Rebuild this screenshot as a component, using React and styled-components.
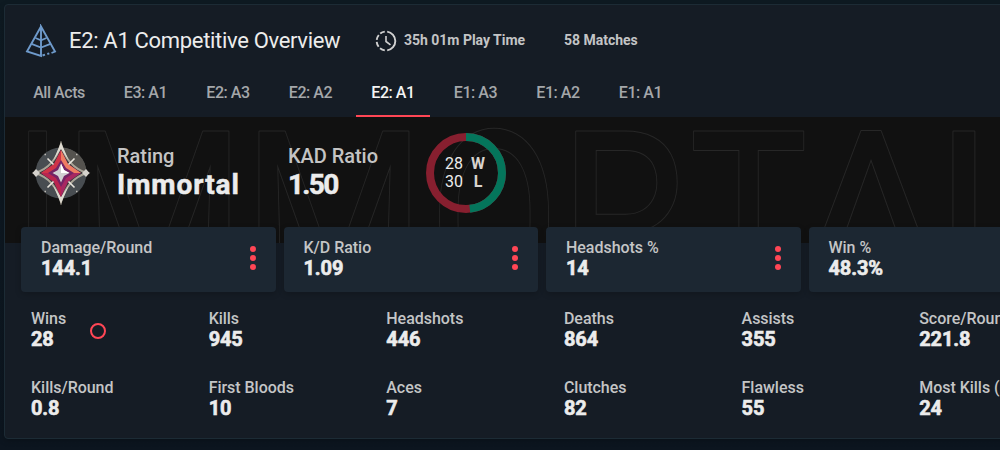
import React from "react";
import styled, { createGlobalStyle } from "styled-components";

const GlobalStyle = createGlobalStyle`
  *, *::before, *::after { box-sizing: border-box; }
  html, body { margin: 0; height: 100%; overflow: hidden; }
  body {
    background: linear-gradient(#0e1a22, #0c151f);
    font-family: Roboto, "Liberation Sans", sans-serif;
    color: #ececec;
    white-space: nowrap;
  }
`;

const Page = styled.main`
  height: 450px;
  padding: 4px;
  overflow: hidden;
`;

const Panel = styled.section`
  width: 1077px;
  height: 435px;
  border: 1px solid #1c2b35;
  border-radius: 4px;
  background: #151c25;
  overflow: hidden;
  box-shadow: 0 2px 6px rgba(0, 0, 0, 0.2);
`;

const Header = styled.header`
  display: flex;
  align-items: center;
  height: 72px;
  padding-left: 20px;
`;

const Title = styled.h1`
  margin: 0 34px 0 12px;
  width: 272px;
  font-size: 22px;
  line-height: 26px;
  font-weight: 400;
  letter-spacing: -0.32px;
`;

const Meta = styled.div`
  display: flex;
  align-items: center;
  gap: 7px;
  width: ${(p) => p.$width}px;
  margin-top: -2px;
  font-size: 14px;
  font-weight: 700;
  letter-spacing: -0.02px;
  color: #c3c4c5;
  svg { position: relative; top: 1px; }
`;

const Tabs = styled.nav`
  display: flex;
  gap: 8.5px;
  height: 40px;
  padding-left: 13px;
`;

const Tab = styled.div`
  width: ${(p) => (p.$wide ? 82 : 74)}px;
  height: 40px;
  line-height: 32px;
  text-align: center;
  font-size: 16px;
  font-weight: 500;
  letter-spacing: -0.45px;
  color: ${(p) => (p.$active ? "#f4f4f4" : "#a4a7aa")};
  border-bottom: 2px solid ${(p) => (p.$active ? "#ff4655" : "transparent")};
`;

const Banner = styled.div`
  position: relative;
  height: 126px;
  background: #111;
  overflow: hidden;
`;

const Watermark = styled.svg`
  position: absolute;
  inset: 0;
  font-family: Roboto, sans-serif;
  font-size: 239px;
  fill: #111;
  stroke: #272727;
  stroke-width: 2px;
  stroke-linejoin: round;
  paint-order: stroke;
`;

const Summary = styled.div`
  position: relative;
  display: flex;
  align-items: center;
  height: 112px;
  padding-left: 26px;
`;

const Rank = styled.div`
  width: ${(p) => p.$width}px;
  margin: -4px 0 0 ${(p) => p.$gap}px;
`;

const RankLabel = styled.div`
  font-size: 20px;
  line-height: 26px;
  font-weight: 500;
  letter-spacing: -0.05px;
  color: #c4c4c4;
`;

const RankValue = styled.div`
  font-size: 28px;
  line-height: 31px;
  font-weight: 700;
  letter-spacing: ${(p) => p.$spacing}px;
  -webkit-text-stroke: 0.5px currentColor;
`;

const Record = styled.div`
  position: relative;
  display: grid;
  place-items: center;
  width: 80px;
  height: 80px;
  svg { position: absolute; inset: 0; }
`;

const RecordGrid = styled.div`
  display: grid;
  grid-template-columns: 20px 18px;
  column-gap: 4px;
  line-height: 18px;
  font-size: 16px;
  b { text-align: center; color: #d8d3ce; }
`;

const Cards = styled.div`
  position: relative;
  display: grid;
  grid-template-columns: repeat(4, 254.5px);
  gap: 8px;
  margin: -16px 0 0 16px;
`;

const Card = styled.div`
  display: flex;
  align-items: center;
  justify-content: space-between;
  height: 65px;
  padding: 0 20px 4px;
  border-radius: 4px;
  background: #1c2732;
  box-shadow: 0 2px 6px rgba(0, 0, 0, 0.2);
`;

const Label = styled.div`
  font-size: 16px;
  line-height: 20px;
  font-weight: 500;
  letter-spacing: -0.03px;
  color: #c4c5c6;
`;

const Value = styled.div`
  font-size: 20px;
  line-height: 20px;
  font-weight: 700;
  letter-spacing: -0.12px;
  -webkit-text-stroke: 0.6px currentColor;
`;

const Dots = styled.div`
  display: grid;
  gap: 3px;
  margin-top: 1px;
  i { width: 6px; height: 6px; border-radius: 50%; background: #ff4655; }
`;

const StatGrid = styled.div`
  display: grid;
  grid-template-columns: repeat(6, 177.65px);
  grid-auto-rows: 69px;
  padding: 17px 0 0 26px;
`;

const Stat = styled.div`
  display: flex;
  gap: 24px;
`;

const Hollow = styled.i`
  width: 16px;
  height: 16px;
  margin-top: 14px;
  border: 2.5px solid #ff4655;
  border-radius: 50%;
`;

const PyramidIcon = () => (
  <svg width="32" height="34" viewBox="0 0 32 34" fill="none" stroke="#6e9acb" strokeWidth="1.9">
    <path d="M16 2.500 2 27.500 16 32V2.500L30 27.500 26.500 29" />
    <path d="M10.500 14 16 16.300 21.500 14M6.500 19.800 16 23.500 25.500 19.800" strokeWidth="1.800" />
    <path d="M17.500 31.500 20 30.600M22.300 30 24.300 29.300" />
  </svg>
);

const TimeIcon = () => (
  <svg width="22" height="22" viewBox="0 0 22 22" fill="none" stroke="#d0d0d0" strokeWidth="1.900">
    <path d="M12.200 1.600A9.500 9.500 0 0 1 12.200 20.400" />
    <path d="M9.800 20.400A9.500 9.500 0 0 1 9.800 1.600" strokeDasharray="5.300 2" />
    <path d="M11 6V11.500L15.500 14.800" strokeWidth="1.600" />
  </svg>
);

const RankEmblem = () => (
  <svg width="60" height="64" viewBox="0 0 60 64">
    <circle cx="30" cy="32" r="25.500" fill="#484d51" />
    <path d="M30 6.500A25.500 25.500 0 0 1 55.500 32H30Z" fill="#55534f" />
    <path d="M30 3Q36 26 56 32 36 38 30 61 24 38 4 32 24 26 30 3Z" fill="#383638" stroke="#a9a396" strokeWidth="2" />
    <path d="M30 1.500 38 20 30 8 22 20ZM30 62.500 38 44 30 56 22 44Z" fill="#dedbd1" />
    <path d="M30 9 37 23 50 32 37 41 30 56 23 41 10 32 23 23Z" fill="#a82762" />
    <path d="M30 9 37 23 50 32H30Z" fill="#ef7c62" />
    <path d="M30 9 23 23 10 32H30Z" fill="#cf3447" />
    <path d="M10 32 23 41 30 56V32Z" fill="#b9254f" />
    <path d="M30 19 35 27 43 32 35 37 30 46 25 37 17 32 25 27Z" fill="#752365" />
    <path d="M30 22.500 33 29 38.500 32 33 35 30 41.500 27 35 21.500 32 27 29Z" fill="#d0d0d2" />
    <path d="M30 22.500 33 29 38.500 32H30Z" fill="#fff" />
    <path d="M16.500 17.500 22.500 23.500M43.500 17.500 37.500 23.500M16.500 46.500 22.500 40.500M43.500 46.500 37.500 40.500" stroke="#e8e4dc" strokeWidth="1.600" />
    <path d="M1.500 32 5 28 9 32 5 36ZM51 32 55 28 58.500 32 55 36Z" fill="#d5d2cc" />
    <path d="M13.500 13.500h1.500M45 13.500h1.500M13.500 50.500h1.500M45 50.500h1.500" stroke="#bdbab4" strokeWidth="1.500" />
  </svg>
);

const RecordRing = () => (
  <svg width="80" height="80" viewBox="0 0 80 80" fill="none" strokeWidth="8">
    <circle cx="40" cy="40" r="36" stroke="#871f2f" />
    <circle cx="40" cy="40" r="36" stroke="#04755b" pathLength="100" strokeDasharray="48.3 51.7" transform="rotate(-90 40 40)" />
  </svg>
);

/* Letter, left edge and advance width of each outlined capital. */
const letters = [
  ["I", 8, 49],
  ["M", 57, 184],
  ["M", 237, 184],
  ["O", 424, 130],
  ["R", 554, 128],
  ["T", 684, 119],
  ["A", 789, 154],
  ["L", 930, 120],
];

const tabs = ["All Acts", "E3: A1", "E2: A3", "E2: A2", "E2: A1", "E1: A3", "E1: A2", "E1: A1"];

const cards = [
  ["Damage/Round", "144.1"],
  ["K/D Ratio", "1.09"],
  ["Headshots %", "14"],
  ["Win %", "48.3%"],
];

const stats = [
  ["Wins", "28"],
  ["Kills", "945"],
  ["Headshots", "446"],
  ["Deaths", "864"],
  ["Assists", "355"],
  ["Score/Round", "221.8"],
  ["Kills/Round", "0.8"],
  ["First Bloods", "10"],
  ["Aces", "7"],
  ["Clutches", "82"],
  ["Flawless", "55"],
  ["Most Kills (Match)", "24"],
];

export default function App() {
  return (
    <Page>
      <GlobalStyle />
      <Panel>
        <Header>
          <PyramidIcon />
          <Title>E2: A1 Competitive Overview</Title>
          <Meta $width={189}>
            <TimeIcon />
            35h 01m Play Time
          </Meta>
          <Meta $width={90}>58 Matches</Meta>
        </Header>
        <Tabs>
          {tabs.map((name) => (
            <Tab key={name} $wide={name === "All Acts"} $active={name === "E2: A1"}>
              {name}
            </Tab>
          ))}
        </Tabs>
        <Banner>
          <Watermark width="1075" height="126" aria-hidden="true">
            {letters.map(([ch, x, w]) => (
              <text key={x} x={x} y="185" textLength={w} lengthAdjust="spacingAndGlyphs">
                {ch}
              </text>
            ))}
          </Watermark>
          <Summary>
            <RankEmblem />
            <Rank $width={150} $gap={26}>
              <RankLabel>Rating</RankLabel>
              <RankValue $spacing={0.95}>Immortal</RankValue>
            </Rank>
            <Rank $width={138} $gap={21}>
              <RankLabel>KAD Ratio</RankLabel>
              <RankValue $spacing={-1.7}>1.50</RankValue>
            </Rank>
            <Record>
              <RecordRing />
              <RecordGrid>
                <span>28</span>
                <b>W</b>
                <span>30</span>
                <b>L</b>
              </RecordGrid>
            </Record>
          </Summary>
        </Banner>
        <Cards>
          {cards.map(([label, value]) => (
            <Card key={label}>
              <div>
                <Label>{label}</Label>
                <Value>{value}</Value>
              </div>
              <Dots>
                <i />
                <i />
                <i />
              </Dots>
            </Card>
          ))}
        </Cards>
        <StatGrid>
          {stats.map(([label, value]) => (
            <Stat key={label}>
              <div>
                <Label>{label}</Label>
                <Value>{value}</Value>
              </div>
              {label === "Wins" && <Hollow />}
            </Stat>
          ))}
        </StatGrid>
      </Panel>
    </Page>
  );
}
